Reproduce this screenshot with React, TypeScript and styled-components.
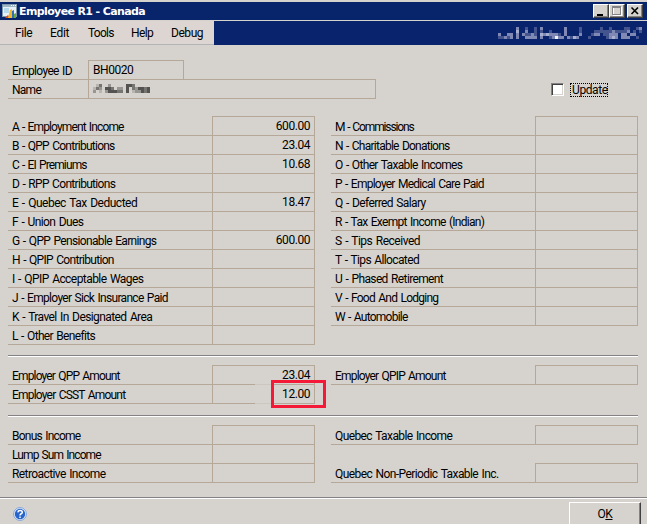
import React from 'react';
import styled, { createGlobalStyle } from 'styled-components';

const face = '#d6d3ce';
const rule = '#b5a899';
const navy = '#08246b';

const Global = createGlobalStyle`
  body { margin: 0; background: ${face}; overflow: hidden; }
  * { box-sizing: border-box; }
`;

const Window = styled.div`
  width: 647px;
  height: 524px;
  display: flex;
  flex-direction: column;
  overflow: hidden;
  padding-top: 2px;
  background: ${face};
  color: #000;
  font: 12px/14px Roboto, 'Liberation Sans', sans-serif;
  white-space: nowrap;
`;

const TitleBar = styled.header`
  height: 18px;
  flex: none;
  display: flex;
  align-items: center;
  padding: 0 4px 0 2px;
  background: ${navy};
  color: #fff;
`;

const Title = styled.h1`
  flex: 1;
  margin: 0 0 0 1px;
  padding-top: 1px;
  font: bold 11px/18px 'DejaVu Sans', sans-serif;
  letter-spacing: -0.62px;
`;

const CaptionButton = styled.button<{ $gap?: boolean }>`
  width: 16px;
  height: 14px;
  padding: 0;
  margin-left: ${(p) => (p.$gap ? 2 : 0)}px;
  display: block;
  background: ${face};
  border: 1px solid;
  border-color: #fff #404040 #404040 #fff;
  box-shadow: inset -1px -1px #848284;
  svg { display: block; }
`;

const MenuStrip = styled.div`
  height: 24px;
  flex: none;
  margin-top: 1px;
  display: flex;
  background: #0a236d;
`;

const Menu = styled.nav`
  width: 214px;
  display: flex;
  padding: 5px 0 0 15px;
  background: #dcd5d1;
  border-bottom: 1px solid #b4b4b6;
`;

const MenuItem = styled.span<{ $width: number; $track: number }>`
  width: ${(p) => p.$width}px;
  letter-spacing: ${(p) => p.$track}px;
`;

const Company = styled.div`
  margin: 6px 0 0 auto;
  padding-right: 5px;
`;

const Header = styled.section`
  display: flex;
  flex: none;
  height: 47px;
  margin: 16px 9px 0 8px;
`;

const Identity = styled.div`
  width: 368px;
`;

const Row = styled.div<{ $width?: number }>`
  display: flex;
  height: 19px;
  width: ${(p) => (p.$width ? `${p.$width}px` : 'auto')};
`;

const Label = styled.div<{ $track: number; $width?: number }>`
  flex: ${(p) => (p.$width ? `0 0 ${p.$width}px` : '1')};
  padding: 3px 0 0 4px;
  border-bottom: 1px solid ${rule};
  letter-spacing: ${(p) => p.$track}px;
  word-spacing: 1px;
`;

const Field = styled.div<{ $left?: boolean }>`
  position: relative;
  flex: ${(p) => (p.$left ? '1' : '0 0 103px')};
  height: 20px;
  margin-top: -1px;
  padding: ${(p) => (p.$left ? '2px 4px 0 4px' : '2px 4px 0 0')};
  border: 1px solid ${rule};
  text-align: ${(p) => (p.$left ? 'left' : 'right')};
  letter-spacing: -0.45px;
`;

const Redacted = styled.div`
  margin-top: 2px;
`;

const Spacer = styled.div`
  height: 19px;
`;

const UpdateOption = styled.label`
  display: flex;
  align-items: flex-start;
  gap: 6px;
  margin: 22px 0 0 auto;
  padding-right: 30px;
`;

const CheckBox = styled.span`
  width: 13px;
  height: 13px;
  background: #fff;
  border: 1px solid;
  border-color: #848284 #fff #fff #848284;
  box-shadow: inset 1px 1px #404040, inset -1px -1px ${face};
`;

const UpdateText = styled.span`
  width: 38px;
  height: 14px;
  padding-left: 1px;
  border: 1px dotted #000;
  line-height: 13px;
  letter-spacing: -0.4px;
`;

const Section = styled.section<{ $height: number }>`
  flex: none;
  height: ${(p) => p.$height}px;
  margin: 0 9px 0 8px;
  padding-top: 9px;
  display: grid;
  grid-template-columns: 307px 307px;
  column-gap: 16px;
  align-content: start;
`;

const Divider = styled.hr<{ $full?: boolean }>`
  flex: none;
  width: ${(p) => (p.$full ? '100%' : 'auto')};
  height: 2px;
  margin: ${(p) => (p.$full ? '0' : '0 9px 0 8px')};
  border: 0;
  background: linear-gradient(#848284 50%, #fff 50%);
`;

const Highlight = styled.span`
  position: absolute;
  left: 58px;
  top: -5px;
  width: 55px;
  height: 28px;
  border: 3px solid #f31937;
`;

const FadedRule = styled.span<{ $top: number }>`
  position: absolute;
  left: 42px;
  top: ${(p) => p.$top}px;
  width: 18px;
  height: 1px;
  background: #ccc8c0;
`;

const Footer = styled.footer`
  flex: 1;
  display: flex;
  justify-content: space-between;
  padding: 3px 6px 0 13px;
`;

const Help = styled.span`
  margin-top: 5px;
  svg { display: block; }
`;

const OkButton = styled.button`
  width: 72px;
  height: 28px;
  padding: 0 0 4px;
  background: ${face};
  border: 1px solid;
  border-color: #fff #404040 #404040 #fff;
  box-shadow: inset -1px -1px #848284;
  color: #000;
  font: 12px/14px Roboto, 'Liberation Sans', sans-serif;
  letter-spacing: -0.4px;
`;

type Entry = [label: string, track: number, value?: string];

const leftEntries: Entry[] = [
  ['A - Employment Income', -0.73, '600.00'],
  ['B - QPP Contributions', -0.6, '23.04'],
  ['C - EI Premiums', -0.68, '10.68'],
  ['D - RPP Contributions', -0.55],
  ['E - Quebec Tax Deducted', -0.31, '18.47'],
  ['F - Union Dues', -0.38],
  ['G - QPP Pensionable Earnings', -0.52, '600.00'],
  ['H - QPIP Contribution', -0.55],
  ['I - QPIP Acceptable Wages', -0.4],
  ['J - Employer Sick Insurance Paid', -0.54],
  ['K - Travel In Designated Area', -0.42],
  ['L - Other Benefits', -0.5],
];

const rightEntries: Entry[] = [
  ['M - Commissions', -0.98],
  ['N - Charitable Donations', -0.63],
  ['O - Other Taxable Incomes', -0.51],
  ['P - Employer Medical Care Paid', -0.58],
  ['Q - Deferred Salary', -0.46],
  ['R - Tax Exempt Income (Indian)', -0.54],
  ['S - Tips Received', -0.31],
  ['T - Tips Allocated', -0.46],
  ['U - Phased Retirement', -0.49],
  ['V - Food And Lodging', -0.54],
  ['W - Automobile', -0.62],
];

const companyBlocks = [
  '......2..1..1.2.......2....1......1..1....11..12',
  '......3..2..1.1..1....2....1....111111211112.1.1',
  '2..22.2.21121.3232221.2....2...122.11222.22.22..',
  '11212.2..2222.2..12422.2132...1.....1232.222..1.',
];
const nameBlocks = [
  '.13..2.....443.....',
  '132.443.22.4.324434',
  '2.1.244433.4.122434',
];
const companyInk = ['', '#43548f', '#8089b4', '#a9b0cf', '#f2f3f7'];
const nameInk = ['', '#b8b5b1', '#989692', '#777572', '#555351'];

function Mosaic({ rows, ink, size = 3 }: { rows: string[]; ink: string[]; size?: number }) {
  return (
    <svg width={rows[0].length * size} height={rows.length * size} shapeRendering="crispEdges" display="block">
      {rows.flatMap((row, y) =>
        [...row].map((c, x) =>
          c === '.' ? null : (
            <rect key={`${x}-${y}`} x={x * size} y={y * size} width={size} height={size} fill={ink[+c]} />
          ),
        ),
      )}
    </svg>
  );
}

function AppIcon() {
  return (
    <svg width="16" height="16" viewBox="0 0 16 16">
      <rect x=".5" y="1.5" width="14" height="12" fill="#e8f1f5" stroke="#7d98aa" />
      <path d="M1 2h13v2H1z" fill="#9eb7c6" />
      <path d="M9 2.5h1m1 0h1m1 0h1" stroke="#fff" />
      <path d="M2 5h5v5H2z" fill="#b7d9ec" />
      <path d="M3 15l3-3 2 3z" fill="#df4b2b" />
      <path d="M6 15l2-8 2-1v9H7z" fill="#f5b82c" />
      <path d="M10 8l2-1v8h-2z" fill="#2d72b8" />
      <path d="M12 11l2-1v5h-2z" fill="#69a83b" />
    </svg>
  );
}

function HelpIcon() {
  return (
    <svg width="14" height="14" viewBox="0 0 14 14">
      <circle cx="7" cy="7" r="6.4" fill="#eef4fc" stroke="#7ba0da" />
      <circle cx="7" cy="7" r="5.2" fill="#2865cb" />
      <path d="M4.8 5.3C5 3.9 6 3.5 7.2 3.5c2.6 0 2.8 2.4 1 3.2C7.1 7.2 7 7.6 7 8.4M7 9.6v1.5" fill="none" stroke="#fff" strokeWidth="1.5" />
    </svg>
  );
}

function EntryRow({ entry, highlighted }: { entry: Entry; highlighted?: boolean }) {
  const [label, track, value] = entry;
  // Each space is 1px wider, so the letters give that width back.
  const spaces = label.split(' ').length - 1;
  return (
    <Row>
      <Label $track={track - spaces / label.length}>{label}</Label>
      <Field>
        {value}
        {highlighted && (
          <>
            <FadedRule $top={-1} />
            <FadedRule $top={18} />
            <Highlight />
          </>
        )}
      </Field>
    </Row>
  );
}

export default function App() {
  return (
    <Window>
      <Global />
      <TitleBar>
        <AppIcon />
        <Title>Employee R1 - Canada</Title>
        <CaptionButton aria-label="Minimize">
          <svg width="14" height="12"><path d="M3 9h6v2H3z" /></svg>
        </CaptionButton>
        <CaptionButton aria-label="Maximize">
          <svg width="14" height="12" fill="none" shapeRendering="crispEdges">
            <path d="M3.5 2.5h8v8h-8z" stroke="#fff" />
            <path d="M2.5 1.5h8v8h-8zM2 2.5h9" stroke="#848284" />
          </svg>
        </CaptionButton>
        <CaptionButton $gap aria-label="Close">
          <svg width="14" height="12"><path d="M3.5 2.5l6.5 6.5M10 2.5L3.5 9" stroke="#000" strokeWidth="1.6" /></svg>
        </CaptionButton>
      </TitleBar>
      <MenuStrip>
        <Menu>
          <MenuItem $width={35} $track={-0.4}>File</MenuItem>
          <MenuItem $width={38} $track={-0.3}>Edit</MenuItem>
          <MenuItem $width={43} $track={-0.75}>Tools</MenuItem>
          <MenuItem $width={40} $track={-0.6}>Help</MenuItem>
          <MenuItem $width={40} $track={-0.45}>Debug</MenuItem>
        </Menu>
        <Company>
          <Mosaic rows={companyBlocks} ink={companyInk} />
        </Company>
      </MenuStrip>
      <Header>
        <Identity>
          <Row $width={176}>
            <Label $width={80} $track={-0.66}>Employee ID</Label>
            <Field $left>BH0020</Field>
          </Row>
          <Row>
            <Label $width={80} $track={-0.74}>Name</Label>
            <Field $left>
              <Redacted>
                <Mosaic rows={nameBlocks} ink={nameInk} />
              </Redacted>
            </Field>
          </Row>
        </Identity>
        <UpdateOption>
          <CheckBox />
          <UpdateText>Update</UpdateText>
        </UpdateOption>
      </Header>
      <Section $height={247}>
        <div>{leftEntries.map((e) => <EntryRow key={e[0]} entry={e} />)}</div>
        <div>{rightEntries.map((e) => <EntryRow key={e[0]} entry={e} />)}</div>
      </Section>
      <Divider />
      <Section $height={58}>
        <div>
          <EntryRow entry={['Employer QPP Amount', -0.73, '23.04']} />
          <EntryRow entry={['Employer CSST Amount', -0.69, '12.00']} highlighted />
        </div>
        <div>
          <EntryRow entry={['Employer QPIP Amount', -0.71]} />
        </div>
      </Section>
      <Divider />
      <Section $height={80}>
        <div>
          <EntryRow entry={['Bonus Income', -0.68]} />
          <EntryRow entry={['Lump Sum Income', -0.77]} />
          <EntryRow entry={['Retroactive Income', -0.53]} />
        </div>
        <div>
          <EntryRow entry={['Quebec Taxable Income', -0.5]} />
          <Spacer />
          <EntryRow entry={['Quebec Non-Periodic Taxable Inc.', -0.49]} />
        </div>
      </Section>
      <Divider $full />
      <Footer>
        <Help><HelpIcon /></Help>
        <OkButton>O<u>K</u></OkButton>
      </Footer>
    </Window>
  );
}
